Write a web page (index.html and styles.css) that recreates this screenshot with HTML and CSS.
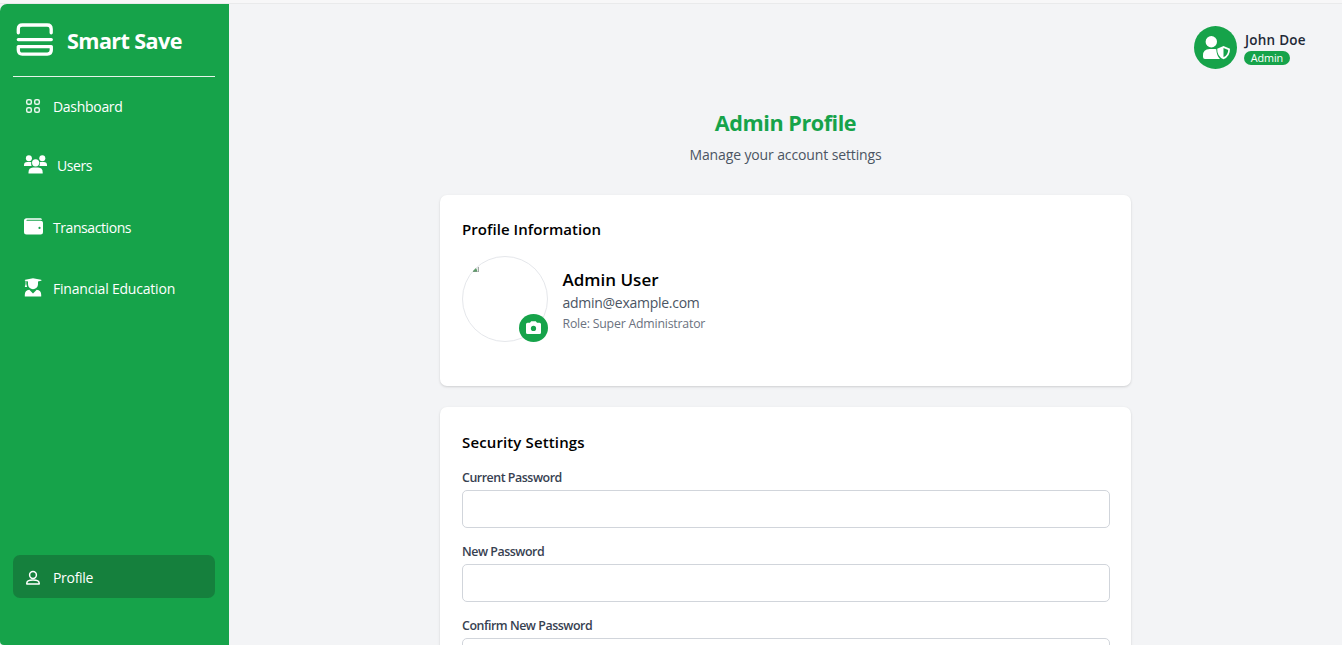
FILE: index.html
```html
<!DOCTYPE html>
<html lang="en">
<head>
<meta charset="utf-8">
<title>Smart Save</title>
<link rel="stylesheet" href="styles.css">
</head>
<body>
<div class="topline"></div>
<div class="app">
  <aside class="sidebar">
    <div class="brand">
      <svg class="brand-icon" viewBox="0 0 38 34" fill="none" stroke="#fff" stroke-width="3.3" stroke-linecap="round" stroke-linejoin="round"><path d="M2.300 9.800V6Q2.300 2 6.300 2h24.900Q35.200 2 35.200 6V9.800M2.300 16.600h33M2.300 23.600h33v3.500q0 4-4 4H6.300q-4 0-4-4z"/></svg>
      <span class="brand-name">Smart Save</span>
    </div>
    <nav class="nav">
      <a class="item dashboard">
        <svg width="18" height="18" viewBox="0 0 18 18" fill="none" stroke="#fff" stroke-opacity=".9" stroke-width="1.500"><rect x="2.700" y="2.700" width="4.600" height="4.600" rx="1.500"/><rect x="10.700" y="2.700" width="4.600" height="4.600" rx="1.500"/><rect x="2.700" y="10.700" width="4.600" height="4.600" rx="1.500"/><rect x="10.700" y="10.700" width="4.600" height="4.600" rx="1.500"/></svg>
        <span class="t-dashboard">Dashboard</span>
      </a>
      <a class="item users">
        <svg width="23" height="19" viewBox="0 0 23 19" fill="#fff"><circle cx="4.900" cy="3.200" r="3"/><circle cx="18.300" cy="3.200" r="3"/><path d="M0 11V10q0-3 3.200-3H6.500q.6 0 .9.300Q6.800 9 7.600 11zM23 11V10q0-3-3.200-3h-3.300q-.6 0-.9.300.6 1.700-.2 3.700z"/><circle cx="11.600" cy="7.800" r="3.600"/><path d="M4.500 18.600v-1.200Q4.500 12.800 9 12.500h5.200q4.500.3 4.500 4.900v1.200z"/></svg>
        <span class="t-users">Users</span>
      </a>
      <a class="item transactions">
        <svg width="19" height="17" viewBox="0 0 19 17" fill="#fff"><path d="M2.600.3h14q1.400 0 1.400 1.500H3.200q-.8 0-.8.500t.8.500h13.500q2.300 0 2.300 2v9.500q0 2.200-2.300 2.200H2.500Q0 16.500 0 14V2.800Q0 .3 2.600.3zM15.500 8.800a1.100 1.100 0 1 0 0 2.200 1.100 1.100 0 1 0 0-2.200z" fill-rule="evenodd"/></svg>
        <span class="t-transactions">Transactions</span>
      </a>
      <a class="item education">
        <svg width="18" height="19" viewBox="0 0 18 19" fill="#fff"><path d="M9 .2 17 1.700Q18.200 2.200 17 2.700L14 3.500v2.700a5 5 0 0 1-10 0V3.500L2.300 3.100V6l.8 3H.8l.8-3V2.900Q0 2.200 1.300 1.700z"/><path d="M5.300 11.800 9 15.500l3.700-3.700q4.500.3 4.500 5v1.800H.8v-1.800q0-4.700 4.500-5z"/></svg>
        <span class="t-education">Financial Education</span>
      </a>
    </nav>
    <a class="item profile">
      <svg width="18" height="18" viewBox="0 0 18 18" fill="none" stroke="#fff" stroke-width="1.500"><circle cx="9" cy="6" r="3.400"/><path d="M2.800 15v-.8q0-3.100 6.200-3.100t6.200 3.100V15z" stroke-linejoin="round"/></svg>
      <span class="t-profile">Profile</span>
    </a>
  </aside>
  <main class="main">
    <header class="account">
      <svg class="account-icon" viewBox="0 0 43 43"><circle cx="21.500" cy="21.500" r="21.500" fill="#16a34a"/><circle cx="17.300" cy="15.700" r="5.700" fill="#fff"/><path d="M9 31v-1.500Q9 23 15.500 23h5.700q.7 0 1.100.2.200 6.300 3.700 9.800H11q-2 0-2-2z" fill="#fff"/><path d="M29.500 20 36 22.700Q36.200 30.300 29.500 33.300 22.900 30.300 23.200 22.700z" fill="#fff"/><path d="M29.500 22 34.200 24Q34.200 29 29.500 31.200z" fill="#16a34a"/></svg>
      <div class="account-text"><span class="account-name">John Doe</span><span class="badge"><span>Admin</span></span></div>
    </header>
    <div class="content">
      <h1><span>Admin Profile</span></h1>
      <p class="subtitle"><span>Manage your account settings</span></p>
      <section class="card info">
        <h2 class="t-info">Profile Information</h2>
        <div class="person">
          <div class="avatar">
            <svg class="missing" width="6" height="5" viewBox="0 0 6 5"><path d="M0 4 3 1l1 2v2H0z" fill="#5c9c68"/><path d="M5.300 0v5H0" fill="none" stroke="#8d9691"/></svg>
            <span class="camera"><svg width="15" height="13" viewBox="0 0 15 13"><path d="M1.500 1.700H4L5.200.2h4.600L11 1.700h2.500Q15 1.700 15 3.200v8.300q0 1.500-1.500 1.500h-12Q0 13 0 11.500V3.200Q0 1.700 1.500 1.700z" fill="#fff"/><circle cx="7.500" cy="7.400" r="2.600" fill="#16a34a"/></svg></span>
          </div>
          <div class="details"><span class="d-name">Admin User</span><span class="d-mail">admin@example.com</span><span class="d-role">Role: Super Administrator</span></div>
        </div>
      </section>
      <section class="card security">
        <h2 class="t-security">Security Settings</h2>
        <label class="field"><span class="l-current">Current Password</span><input type="password"></label>
        <label class="field"><span class="l-new">New Password</span><input type="password"></label>
        <label class="field"><span class="l-confirm">Confirm New Password</span><input type="password"></label>
      </section>
    </div>
  </main>
</div>
</body>
</html>
```
FILE: styles.css
```css
* { box-sizing: border-box; }
body { margin: 0; height: 645px; overflow: hidden; background: #f3f4f6; font-family: "Open Sans", "Noto Sans", sans-serif; font-size: 14px; color: #000; }
.topline { height: 4px; background: #f7f7f8; border-bottom: 1px solid #e9eaeb; }
.app { display: flex; height: 641px; }
.sidebar { width: 229px; flex: none; background: #16a34a; border-radius: 7px 0 0 4px; padding: 0 14px 47px 13px; color: #fff; display: flex; flex-direction: column; }
.brand { height: 73px; border-bottom: 1px solid #e5f5ea; display: flex; align-items: flex-start; padding: 19px 0 0 3px; }
.brand-icon { width: 38px; height: 34px; }
.brand-name { font-size: 21.6px; line-height: 30px; font-weight: 700; margin: 3px 0 0 13px; letter-spacing: -.6px; white-space: nowrap; }
.nav { flex: 1; }
.item { display: flex; align-items: center; height: 43px; padding-left: 11px; white-space: nowrap; }
.item svg { flex: none; }
.item span { padding-top: 1px; }
.dashboard { margin-top: 7px; }
.dashboard svg, .profile svg { margin-right: 11px; }
.users { margin-top: 16px; }
.users svg { margin-right: 10px; }
.transactions { margin-top: 19px; }
.transactions svg { margin-right: 10px; }
.education { margin-top: 18px; }
.education svg { margin-right: 11px; }
.t-dashboard { letter-spacing: -.3px; }
.t-users { letter-spacing: -.4px; }
.t-transactions { letter-spacing: -.42px; }
.t-education { letter-spacing: -.2px; }
.t-profile { letter-spacing: -.3px; }
.profile { background: #15803d; border-radius: 7px; }
.profile svg { margin-top: 2px; }
.main { flex: 1; display: flex; flex-direction: column; overflow: hidden; }
.account { flex: none; display: flex; align-self: flex-end; width: 148px; height: 103px; padding-top: 22px; gap: 7px; }
.account-icon { width: 43px; height: 43px; flex: none; }
.account-text { display: flex; flex-direction: column; align-items: flex-start; padding-top: 4px; white-space: nowrap; }
.account-name { font-size: 13.5px; line-height: 20px; font-weight: 600; color: #1f2937; letter-spacing: .25px; padding-left: 1px; }
.badge { display: flex; justify-content: center; width: 46px; height: 14px; margin-top: 1px; border-radius: 7px; background: #16a34a; color: #fff; font-size: 10.800px; line-height: 14px; letter-spacing: -.1px; }
.content { flex: none; width: 691px; margin-left: 211px; }
h1 { margin: 0; font-size: 21.600px; line-height: 31px; text-align: center; color: #16a34a; font-weight: 700; letter-spacing: -.45px; }
.subtitle { margin: 5px 0 0; line-height: 24px; text-align: center; color: #4b5563; letter-spacing: -.12px; }
.card { background: #fff; border-radius: 7px; box-shadow: 0 1px 3px rgba(0,0,0,.1), 0 1px 2px rgba(0,0,0,.06); padding: 22px; }
.info { margin-top: 28px; height: 191px; }
.security { margin-top: 21px; height: 330px; }
h2 { margin: 0; font-size: 15px; line-height: 26px; font-weight: 600; }
.t-info { line-height: 25px; margin-bottom: 14px; letter-spacing: .05px; }
.t-security { margin-bottom: 14px; letter-spacing: .13px; }
.person { display: flex; gap: 14.5px; }
.avatar { position: relative; width: 86px; height: 86px; border: 1px solid #e5e7eb; border-radius: 50%; }
.missing { position: absolute; left: 10px; top: 10px; }
.camera { position: absolute; right: -1px; bottom: -1px; width: 29px; height: 28px; border-radius: 50%; background: #16a34a; display: flex; align-items: center; justify-content: center; }
.camera svg { margin-top: -1px; }
.details { display: flex; flex-direction: column; align-items: flex-start; padding-top: 11px; white-space: nowrap; }
.d-name { font-size: 17px; line-height: 25px; font-weight: 600; }
.d-mail { font-size: 14px; line-height: 22px; color: #4b5563; letter-spacing: -.27px; }
.d-role { font-size: 12.300px; line-height: 19px; color: #6b7280; letter-spacing: -.2px; }
.field { display: flex; flex-direction: column; align-items: flex-start; height: 74px; font-size: 12.400px; line-height: 18px; font-weight: 600; color: #374151; letter-spacing: -.46px; }
.field input { width: 648px; height: 38px; margin: 3px 0 0; border: 1px solid #d1d5db; border-radius: 5px; background: #fff; }
```
